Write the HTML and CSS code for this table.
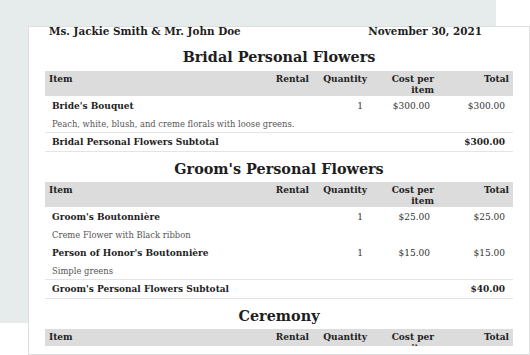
FILE: index.html
```html
<!DOCTYPE html>
<html lang="en">
<head>
<meta charset="utf-8">
<title>Flower Proposal</title>
<link rel="stylesheet" href="styles.css">
</head>
<body>
<div class="stage">
  <div class="backdrop"></div>
  <div class="card">
    <div class="sheet">
      <div class="meta">
        <span>Ms. Jackie Smith &amp; Mr. John Doe</span>
        <span>November 30, 2021</span>
      </div>

      <section class="section">
        <h2 class="section-title">Bridal Personal Flowers</h2>
        <table class="items">
          <colgroup>
            <col class="c-item"><col class="c-rental"><col class="c-qty"><col class="c-cost"><col class="c-total">
          </colgroup>
          <thead>
            <tr><th class="left">Item</th><th>Rental</th><th>Quantity</th><th>Cost per<br>item</th><th>Total</th></tr>
          </thead>
          <tbody>
            <tr class="name"><td class="left">Bride's Bouquet</td><td></td><td class="num">1</td><td class="num">$300.00</td><td class="num">$300.00</td></tr>
            <tr class="desc"><td colspan="5">Peach, white, blush, and creme florals with loose greens.</td></tr>
            <tr class="subtotal"><td colspan="4" class="left">Bridal Personal Flowers Subtotal</td><td class="num">$300.00</td></tr>
          </tbody>
        </table>
      </section>

      <section class="section">
        <h2 class="section-title">Groom's Personal Flowers</h2>
        <table class="items">
          <colgroup>
            <col class="c-item"><col class="c-rental"><col class="c-qty"><col class="c-cost"><col class="c-total">
          </colgroup>
          <thead>
            <tr><th class="left">Item</th><th>Rental</th><th>Quantity</th><th>Cost per<br>item</th><th>Total</th></tr>
          </thead>
          <tbody>
            <tr class="name"><td class="left">Groom's Boutonnière</td><td></td><td class="num">1</td><td class="num">$25.00</td><td class="num">$25.00</td></tr>
            <tr class="desc"><td colspan="5">Creme Flower with Black ribbon</td></tr>
            <tr class="name"><td class="left">Person of Honor's Boutonnière</td><td></td><td class="num">1</td><td class="num">$15.00</td><td class="num">$15.00</td></tr>
            <tr class="desc"><td colspan="5">Simple greens</td></tr>
            <tr class="subtotal"><td colspan="4" class="left">Groom's Personal Flowers Subtotal</td><td class="num">$40.00</td></tr>
          </tbody>
        </table>
      </section>

      <section class="section">
        <h2 class="section-title">Ceremony</h2>
        <table class="items">
          <colgroup>
            <col class="c-item"><col class="c-rental"><col class="c-qty"><col class="c-cost"><col class="c-total">
          </colgroup>
          <thead>
            <tr><th class="left">Item</th><th>Rental</th><th>Quantity</th><th>Cost per<br>item</th><th>Total</th></tr>
          </thead>
        </table>
      </section>
    </div>
  </div>
</div>
</body>
</html>
```

FILE: styles.css
```css
* { box-sizing: border-box; }

html, body {
  margin: 0;
  padding: 0;
  background: #ffffff;
}

body {
  font-family: "DejaVu Serif", "Liberation Serif", serif;
  color: #222222;
}

.stage {
  display: grid;
  width: 530px;
  height: 355px;
  overflow: hidden;
}

.backdrop {
  grid-area: 1 / 1;
  width: 496px;
  height: 323px;
  background: #e6ebeb;
}

.card {
  grid-area: 1 / 1;
  margin: 26px 0 0 28px;
  width: 502px;
  height: 329px;
  background: #ffffff;
  border: 1px solid #dedede;
  padding: 0 16px 6px 16px;
}

.sheet {
  height: 100%;
  clip-path: inset(-20px -20px 0 -20px);
}

.meta {
  display: flex;
  justify-content: space-between;
  margin-top: -2px;
  padding: 0 31px 0 4px;
  font-size: 10.4px;
  line-height: 12px;
  font-weight: bold;
  color: #1e1e1e;
}

.section-title {
  margin: 8px 0 4px;
  font-size: 14.4px;
  line-height: 18px;
  font-weight: bold;
  text-align: center;
  color: #1e1e1e;
}

.section:first-of-type .section-title {
  margin-top: 11px;
  margin-bottom: 5px;
}

.items {
  width: 100%;
  border-collapse: separate;
  border-spacing: 0;
  table-layout: fixed;
  font-size: 9px;
  line-height: 11px;
}

.c-item { width: 226px; }
.c-rental { width: 42px; }
.c-qty { width: 58px; }
.c-cost { width: 67px; }
.c-total { width: 75px; }

.items th {
  background: #dcdcdc;
  font-weight: bold;
  text-align: right;
  vertical-align: top;
  padding: 3px 4px 0;
  height: 25px;
  white-space: nowrap;
  color: #222222;
}

.items th.left { text-align: left; }

.items td {
  padding: 2px 8px 0 7px;
  height: 18px;
  vertical-align: middle;
  white-space: nowrap;
}

.items td.num {
  text-align: right;
  color: #333333;
}

.items tr.name td.left {
  font-weight: bold;
  color: #1e1e1e;
}

.items tr.desc td {
  font-size: 8.4px;
  color: #555555;
}

.items tr.subtotal td {
  height: 20px;
  padding-top: 0;
  font-weight: bold;
  border-top: 1px solid #e4e4e4;
  border-bottom: 1px solid #e4e4e4;
  color: #1e1e1e;
}
```
